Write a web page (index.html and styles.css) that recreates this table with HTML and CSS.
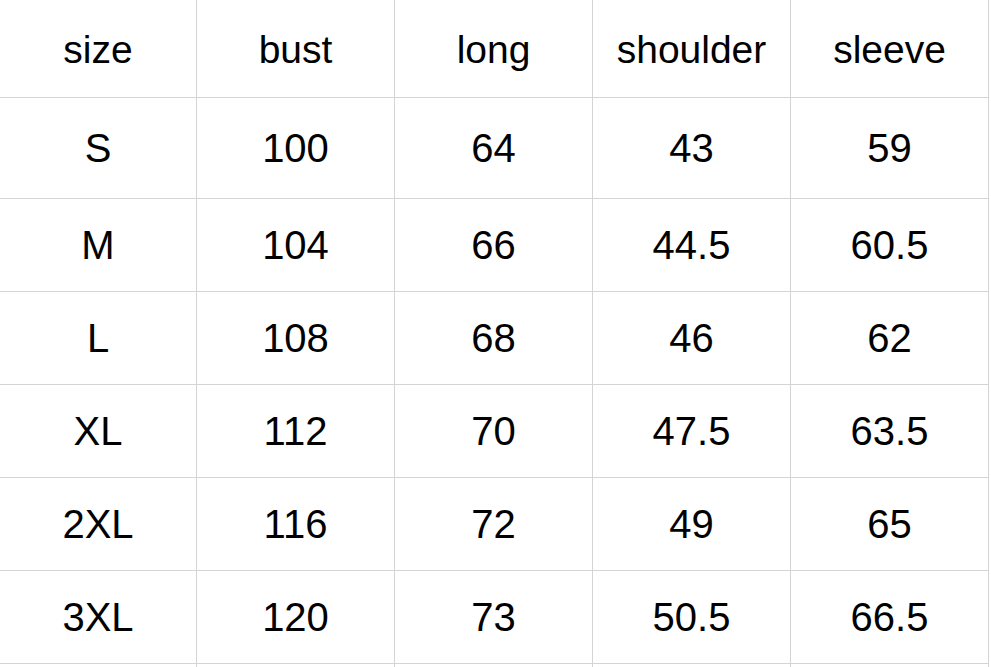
FILE: index.html
```html
<!DOCTYPE html>
<html lang="en">
<head>
<meta charset="utf-8">
<title>Size chart</title>
<link rel="stylesheet" href="styles.css">
</head>
<body>
<div class="chart">
  <div class="cell head c1">size</div>
  <div class="cell head">bust</div>
  <div class="cell head">long</div>
  <div class="cell head">shoulder</div>
  <div class="cell head">sleeve</div>

  <div class="cell first c1">S</div>
  <div class="cell first">100</div>
  <div class="cell first">64</div>
  <div class="cell first">43</div>
  <div class="cell first">59</div>

  <div class="cell c1">M</div>
  <div class="cell">104</div>
  <div class="cell">66</div>
  <div class="cell">44.5</div>
  <div class="cell">60.5</div>

  <div class="cell c1">L</div>
  <div class="cell">108</div>
  <div class="cell">68</div>
  <div class="cell">46</div>
  <div class="cell">62</div>

  <div class="cell c1">XL</div>
  <div class="cell">112</div>
  <div class="cell">70</div>
  <div class="cell">47.5</div>
  <div class="cell">63.5</div>

  <div class="cell c1">2XL</div>
  <div class="cell">116</div>
  <div class="cell">72</div>
  <div class="cell">49</div>
  <div class="cell">65</div>

  <div class="cell c1">3XL</div>
  <div class="cell">120</div>
  <div class="cell">73</div>
  <div class="cell">50.5</div>
  <div class="cell">66.5</div>

  <div class="cell tail c1"></div>
  <div class="cell tail"></div>
  <div class="cell tail"></div>
  <div class="cell tail"></div>
  <div class="cell tail"></div>
</div>
</body>
</html>
```

FILE: styles.css
```css
html, body {
  margin: 0;
  padding: 0;
  background: #ffffff;
  overflow: hidden;
}

.chart {
  display: grid;
  grid-template-columns: 197px 198px 198px 198px 198px;
  grid-template-rows: 98px 101px repeat(5, 93px) 3px;
  width: 989px;
  font-family: "Liberation Sans", Arial, sans-serif;
  font-size: 40px;
  color: #000000;
}

.cell {
  box-sizing: border-box;
  border-right: 1px solid #d4d4d4;
  border-bottom: 1px solid #d4d4d4;
  display: flex;
  align-items: center;
  justify-content: center;
  line-height: 1;
}

.head {
  font-size: 39px;
  padding-top: 1px;
}

.tail {
  border-bottom: none;
}
```
